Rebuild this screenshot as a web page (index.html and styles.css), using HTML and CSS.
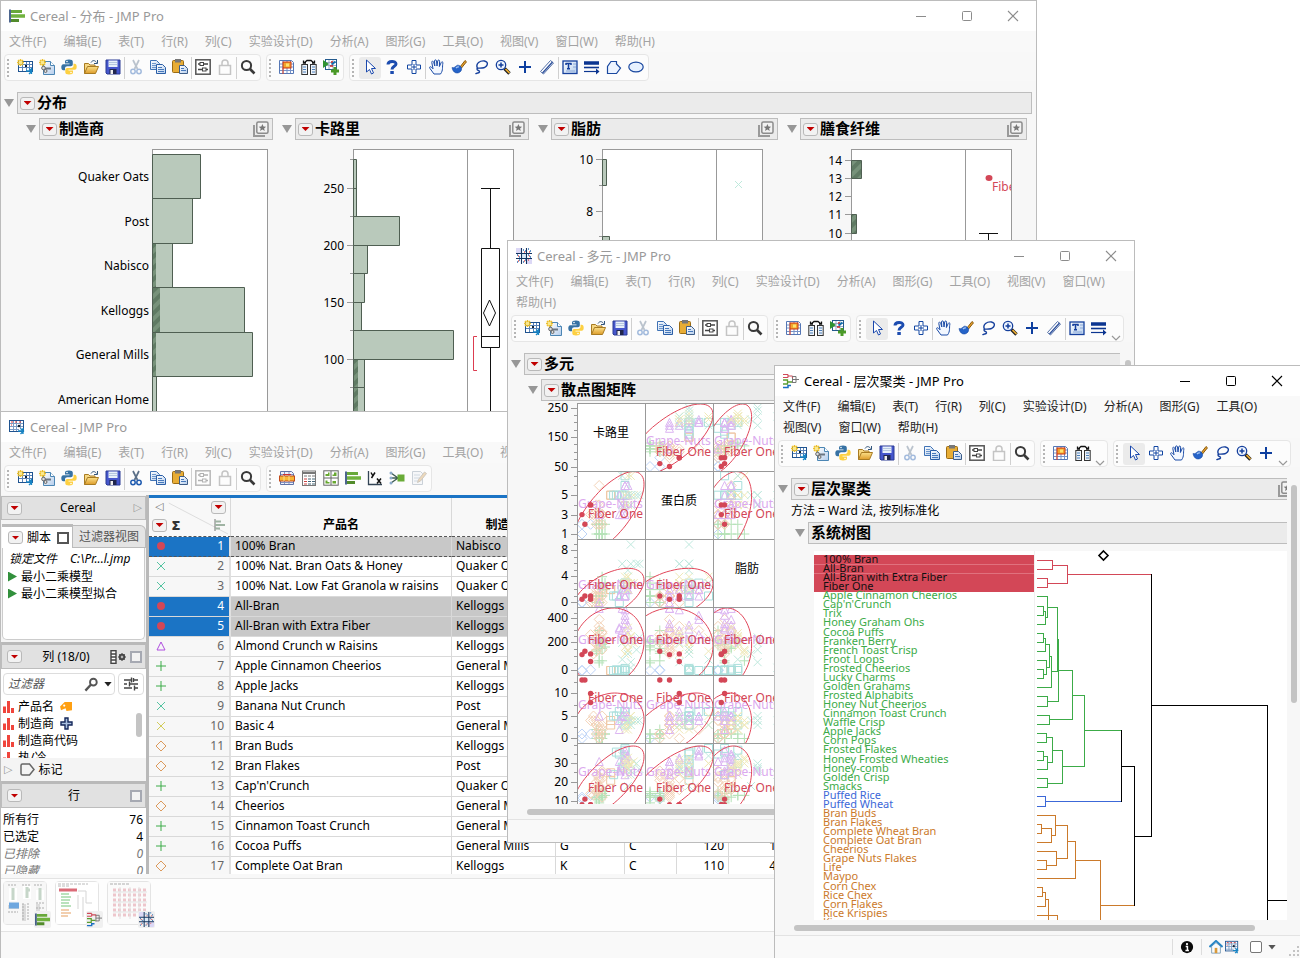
FILE: index.html
```html
<!DOCTYPE html>
<html lang="zh-CN">
<head>
<meta charset="utf-8">
<title>JMP Pro</title>
<link rel="stylesheet" href="styles.css">
</head>
<body>
<svg class="defs" aria-hidden="true">
  <defs>
    <pattern id="hatch" width="8" height="8" patternUnits="userSpaceOnUse" patternTransform="rotate(45)">
      <rect width="8" height="8" fill="#77927a"/><rect width="4" height="8" fill="#5f7a63"/>
    </pattern>
    <linearGradient id="sheet" x1="0" y1="0" x2="1" y2="1"><stop offset="0" stop-color="#fff"/><stop offset="1" stop-color="#b4cdec"/></linearGradient>
    <linearGradient id="gold" x1="0" y1="0" x2="0" y2="1"><stop offset="0" stop-color="#fbe08a"/><stop offset="1" stop-color="#dd9c2a"/></linearGradient>
  </defs>
  <symbol id="i-table" viewBox="0 0 16 16"><rect x=".5" y="1.5" width="14" height="11" fill="#fff" stroke="#1f5390"/><path d="M1 4.500h13M1 7.500h13M1 10.500h9M4.500 2v10M7.500 2v10M11.500 2v8" stroke="#7d9dc5" fill="none"/><path d="M2 3h2M6 3h2M10 3h2M2 6h1" stroke="#d33"/><circle cx="10" cy="7" r="1.300" fill="#123"/><path d="M9 12h5M11.500 9.500l3 2.500-3 3M14 9v6" stroke="#1784c4" stroke-width="1.300" fill="none"/></symbol>
  <symbol id="i-new" viewBox="0 0 16 16"><rect x="1.500" y="2.500" width="14" height="10" fill="#fff" stroke="#1f5390"/><path d="M2 5.500h13M2 8.500h13M5.500 3v9M9.500 3v9M12.500 3v9" stroke="#5b84b8" fill="none"/><rect x="8" y="6" width="2" height="2" fill="#123"/><path d="M9 12h5M12 9.500l3 2.500-3 3M14.500 9v6" stroke="#1784c4" stroke-width="1.300" fill="none"/><path d="M0 3.500h7M3.500 0v7M1 1l5 5M6 1L1 6" stroke="#edc02c" stroke-width="1.500"/><rect x="2" y="2" width="3" height="3" fill="#fbe88a"/></symbol>
  <symbol id="i-script" viewBox="0 0 16 16"><path d="M4.500 2.500h7l4 4v9h-11z" fill="url(#sheet)" stroke="#4c86b4"/><path d="M11.500 2.500v4h4" fill="#fff" stroke="#4c86b4"/><path d="M4 9.500h8" stroke="#6a7683" stroke-width="2"/><circle cx="4.500" cy="9" r="1.800" fill="#ddd" stroke="#666"/><circle cx="6.500" cy="12" r="1.500" fill="#ddd" stroke="#666"/><path d="M0 3.500h7M3.500 0v7M1 1l5 5M6 1L1 6" stroke="#edc02c" stroke-width="1.500"/><rect x="2" y="2" width="3" height="3" fill="#fbe88a"/></symbol>
  <symbol id="i-python" viewBox="0 0 16 16"><path d="M8 .500c-3 0-4 .8-4 2.200V4.500h4.500v.7H2.300C1 5.200.3 6.500.3 8.300c0 2 .8 3 2 3H4V9.500c0-1.300 1-2.200 2.300-2.200h3.500c1.200 0 2-.8 2-2V2.700C11.800 1.200 10.500.5 8 .5z" fill="#3772a4"/><path d="M8 15.500c3 0 4-.8 4-2.200v-1.800H7.500v-.7h6.200c1.300 0 2-1.300 2-3.100 0-2-.8-3-2-3h-1.200v2c0 1.300-1 2.200-2.300 2.200H6.300c-1.200 0-2 .8-2 2v2.400c0 1.500 1.200 2.200 3.700 2.200z" fill="#fdd042"/><circle cx="6" cy="2.500" r=".8" fill="#fff"/><circle cx="10" cy="13.500" r=".8" fill="#fff"/></symbol>
  <symbol id="i-open" viewBox="0 0 16 16"><path d="M1.500 14.500V4.500h4l1.500 1.500h5v2" fill="#f6d783" stroke="#a87b22"/><path d="M1.500 14.500l3-7h11l-3 7z" fill="url(#gold)" stroke="#a87b22"/><path d="M8 3.500c1.500-2.500 4-2.500 5.500 0M14.500 1v3.500H11" fill="none" stroke="#31557c"/></symbol>
  <symbol id="i-save" viewBox="0 0 16 16"><path d="M1 1h14v14H2l-1-1z" fill="#4556cc" stroke="#2b3a94"/><rect x="3.500" y="1.500" width="9" height="6.500" fill="#e7f0fa"/><path d="M4 3.500h8M4 5.500h8" stroke="#b5c7df"/><rect x="4.500" y="10" width="7" height="5" fill="#20264d"/><rect x="5.500" y="11" width="2.500" height="4" fill="#eee"/></symbol>
  <symbol id="i-cut" viewBox="0 0 16 16"><path d="M5 1l4.500 9M11 1L6.500 10" stroke="#5a6f88" stroke-width="1.700"/><circle cx="5" cy="12.500" r="2.200" fill="none" stroke="#1f5bb0" stroke-width="1.500"/><circle cx="11" cy="12.500" r="2.200" fill="none" stroke="#1f5bb0" stroke-width="1.500"/></symbol>
  <symbol id="i-copy" viewBox="0 0 16 16"><path d="M.500 1.500h6l3 3v6h-9z" fill="url(#sheet)" stroke="#3f72b5"/><path d="M2 4.500h4M2 6.500h5M2 8.500h5" stroke="#6c96cc"/><path d="M6.500 5.500h6l3 3v6h-9z" fill="url(#sheet)" stroke="#2b5ea6"/><path d="M8 8.500h4M8 10.500h6M8 12.500h6" stroke="#4678bb"/></symbol>
  <symbol id="i-paste" viewBox="0 0 16 16"><rect x=".500" y="1.500" width="11" height="12" rx="1" fill="#e8ad35" stroke="#9a6b14"/><rect x="3" y="0" width="6" height="3.500" fill="#777"/><path d="M7.500 6.500h5l3 3v5h-8z" fill="url(#sheet)" stroke="#3d5d88"/><path d="M9 9.500h3M9 11.500h5" stroke="#4678bb"/></symbol>
  <symbol id="i-prefs" viewBox="0 0 16 16"><rect x=".800" y=".800" width="14.400" height="14.400" fill="#fff" stroke="#555" stroke-width="1.500"/><path d="M3 5h2M9 5h4M3 10.500h4M11 10.500h2" stroke="#444" stroke-width="1.500"/><rect x="5" y="3.500" width="3.500" height="3" fill="#fff" stroke="#444"/><rect x="7.500" y="9" width="3.500" height="3" fill="#fff" stroke="#444"/></symbol>
  <symbol id="i-lock" viewBox="0 0 16 16"><rect x="2.500" y="6.500" width="11" height="9" fill="none" stroke="#c4c4c4" stroke-width="1.500"/><path d="M5 6.500V4a3 3 0 0 1 6 0v2.500" fill="none" stroke="#c4c4c4" stroke-width="1.500"/></symbol>
  <symbol id="i-search" viewBox="0 0 16 16"><circle cx="6.500" cy="6.500" r="4.600" fill="none" stroke="#3a3a3a" stroke-width="2"/><path d="M10 10l4.500 4.500" stroke="#3a3a3a" stroke-width="2.600"/></symbol>
  <symbol id="i-calgrid" viewBox="0 0 16 16"><path d="M.500 1.500h12l2 2v11h-14z" fill="#fff" stroke="#5577b5"/><path d="M1 5h13M1 8h13M1 11.500h13M4 2v12M8 2v12M11.500 2v12" stroke="#7793c8"/><path d="M4 5.500h8" stroke="#d02c1c"/><rect x="4" y="3" width="8" height="6" fill="#f2a52e" stroke="#cc3311"/><rect x="7" y="4.500" width="3" height="3" fill="#ffe36e"/><path d="M4 9v6" stroke="#e23b1c"/></symbol>
  <symbol id="i-join" viewBox="0 0 16 16"><path d="M3 4L6 1.500h4L13 4M2.500 1.500V4H5M13.500 1.500V4H11" fill="none" stroke="#111" stroke-width="1.300"/><rect x=".800" y="5.500" width="5.700" height="10" fill="#edf3fa" stroke="#333"/><rect x="9.500" y="5.500" width="5.700" height="10" fill="#edf3fa" stroke="#333"/><path d="M2 8h3M2 10.500h3M2 13h3M11 8h3M11 10.500h3M11 13h3" stroke="#4b7fb9"/></symbol>
  <symbol id="i-addgrid" viewBox="0 0 16 16"><rect x="2.500" y=".500" width="11" height="10" fill="#fff" stroke="#235a8d"/><path d="M3 3.500h10M3 6.500h10M6 1v9M10 1v9" stroke="#98aac5"/><path d="M0 1l6 4-6 4z" fill="#2f9330"/><path d="M8 3h2M7 7h3" stroke="#c22" stroke-width="1.500"/><path d="M8.500 5.500l4-3" stroke="#126eae" stroke-width="2"/><path d="M12 8v8M8 12h8" stroke="#4b9a28" stroke-width="3"/></symbol>
  <symbol id="i-arrow" viewBox="0 0 16 16"><path d="M4.500 1v12l3-2.500 2 4.500 2-1-2-4.500h4z" fill="#fff" stroke="#1a48ad"/></symbol>
  <symbol id="i-help" viewBox="0 0 16 16"><path d="M4 5.500C4 1.500 12 1.500 12 5c0 2.300-4 2.500-4 5.500" fill="none" stroke="#1c4cb0" stroke-width="3"/><rect x="6.300" y="12" width="3.500" height="3" fill="#1c4cb0"/></symbol>
  <symbol id="i-plusbox" viewBox="0 0 16 16"><path d="M6 1.500h4V6h4.500v4H10v4.500H6V10H1.500V6H6z" fill="#fff" stroke="#1347a2"/><path d="M8 5v6M5 8h6" stroke="#1347a2"/></symbol>
  <symbol id="i-hand" viewBox="0 0 16 16"><path d="M5 15L1 9.500c-1.200-1.800.7-2.300 1.500-1.200l1.500 1.500L2.800 3.500c-.3-1.700 1.500-1.700 1.900-.3L5.800 7l-.3-5c0-1.500 1.900-1.500 2 0l.5 5 .7-5c.2-1.400 1.900-1.300 1.900.2L10.400 7.500l1.800-4c.6-1.300 2-.6 1.700.6C13 8 14.500 11 11.500 15z" fill="#f2f7ff" stroke="#1b4ba6"/></symbol>
  <symbol id="i-brush" viewBox="0 0 16 16"><path d="M9 8l5-6.500 1.500 1.300L10.500 9z" fill="#e6a02a" stroke="#8a5a10"/><path d="M1 8.500c2 1 3-1 5.500-2.300 3.500 0 5 3 3.500 5.800C7 15.500 2 14.500 1 8.500z" fill="#2563c8" stroke="#1347a2" stroke-width=".600"/><path d="M5 9c1-1 2-1.300 3-1" stroke="#a6c7f5" fill="none" stroke-width="1.300"/></symbol>
  <symbol id="i-lasso" viewBox="0 0 16 16"><path d="M4.500 9.500C2 4 7.500 1.500 11.500 2c5 1 3 6.500-2.500 7-3 .5-5-.5-5 1 0 2 3 1 2.500 3C6 14.500 4 13.500 2.500 15" fill="none" stroke="#153f9c" stroke-width="1.400"/></symbol>
  <symbol id="i-zoom" viewBox="0 0 16 16"><path d="M9.500 9.500l5 5" stroke="#222" stroke-width="3.400"/><path d="M10.500 10l4 4" stroke="#eeae30" stroke-width="1.700"/><circle cx="6" cy="6" r="4.700" fill="#eef5ff" stroke="#153f9c" stroke-width="1.300"/><path d="M6 3.500v5M3.500 6h5" stroke="#153f9c" stroke-width="1.500"/></symbol>
  <symbol id="i-cross" viewBox="0 0 16 16"><path d="M8 2v12M2 8h12" stroke="#0e3f9f" stroke-width="2"/></symbol>
  <symbol id="i-ruler" viewBox="0 0 16 16"><path d="M1.500 12.500l10-11 3 2.500-10 11z" fill="#fff" stroke="#5470a8"/><path d="M3.500 14l10-11" stroke="#2c4f9b" stroke-width="1.300"/></symbol>
  <symbol id="i-text" viewBox="0 0 16 16"><rect x="1" y="2" width="14" height="12.500" fill="url(#sheet)" stroke="#153f9c" stroke-width="1.300"/><path d="M3.500 4.500h6M6.500 4.500V9.500M5 9.700h3M4 4v2M9 4v2" stroke="#153f9c" stroke-width="1.500"/><path d="M11 5h3M11 8h3M4 12h9" stroke="#8ba8d8"/></symbol>
  <symbol id="i-lines" viewBox="0 0 16 16"><path d="M0 4h15" stroke="#0b3590" stroke-width="3.500"/><path d="M0 8.500h15" stroke="#0b3590" stroke-width="1.600"/><path d="M0 12.500h14" stroke="#0b3590" stroke-width="1.200"/><path d="M12 9.500l3.500 3-3.500 3z" fill="#0b3590"/></symbol>
  <symbol id="i-poly" viewBox="0 0 16 16"><path d="M1.500 14.500V7.500L5 2.500h5.500V5L14.500 9l-4 5.500z" fill="#edf4ff" stroke="#1a489f" stroke-width="1.200"/></symbol>
  <symbol id="i-oval" viewBox="0 0 16 16"><ellipse cx="8" cy="8" rx="7.200" ry="4.800" fill="#e7f1ff" stroke="#1a489f" stroke-width="1.200"/></symbol>
  <symbol id="i-globe" viewBox="0 0 16 16"><path d="M1.500 1.500h11l2 2v11h-13z" fill="#eef1fa" stroke="#6073a6"/><path d="M2 4.500h12M2 12.500h12M5.500 2v12M10 2v12" stroke="#8393c2"/><path d="M4 4.500h8" stroke="#c33"/><rect x=".500" y="6" width="15" height="5" fill="#f7b635" stroke="#c24a1b"/><path d="M5 6v5M10 6v5" stroke="#fbe38b"/></symbol>
  <symbol id="i-calc" viewBox="0 0 16 16"><rect x="1.500" y="1" width="13" height="14.500" fill="#fff" stroke="#777"/><path d="M2 3h12" stroke="#777" stroke-width="2"/><path d="M3 6h3M7 6h3M11 6h3" stroke="#777"/><path d="M3 9h3M3 11.500h3M3 14h3" stroke="#c44"/><path d="M7 9h3M7 11.500h3M7 14h3M11 9h3M11 11.500h3M11 14h3" stroke="#467"/></symbol>
  <symbol id="i-quad" viewBox="0 0 16 16"><rect x=".800" y=".800" width="14.400" height="14.400" fill="#fff" stroke="#666"/><path d="M8 1v14M1 8h14" stroke="#666"/><path d="M2.500 6V4H5V2.500H6.500V6zM9.500 6V4.500H11V2.500H13.500V6zM2.500 13.500V10.500H4.500V12H6.500v1.500zM9.500 13.500V11H13v2.500z" fill="#67a82f"/></symbol>
  <symbol id="i-dist" viewBox="0 0 16 16"><path d="M1 1.500v13" stroke="#12336a" stroke-width="1.500"/><path d="M2 3.500h11" stroke="#68a83a" stroke-width="3"/><path d="M2 8h14" stroke="#70b23e" stroke-width="3.500"/><path d="M2 12.500h8" stroke="#528b2b" stroke-width="3"/></symbol>
  <symbol id="i-fit" viewBox="0 0 16 16"><path d="M1.500 1v13.500H15" fill="none" stroke="#345" stroke-width="1.300"/><path d="M4 2.500l2 3.500M8 2.500L4.500 8M10 8.500l4 5M14 8.500l-4 5" stroke="#111" stroke-width="1.500"/></symbol>
  <symbol id="i-model" viewBox="0 0 16 16"><path d="M2 3l7 5-7 5M2 8h7" fill="none" stroke="#3f5d53" stroke-width="1.400"/><circle cx="2" cy="3" r="1.500" fill="#8aa8c8"/><circle cx="2" cy="8" r="1.500" fill="#8aa8c8"/><circle cx="2" cy="13" r="1.500" fill="#8aa8c8"/><rect x="8.500" y="4.500" width="7" height="7" fill="#69ab37"/></symbol>
  <symbol id="i-note" viewBox="0 0 16 16"><path d="M1.500 1.500h8l2 2v11h-10z" fill="#eef2f6" stroke="#8292a5"/><path d="M3 5h6M3 8h6M3 11h6" stroke="#8fa4bb"/><path d="M6.500 12.500l1-3 6-7.500 2 1.500-6 7.500z" fill="#d9a55a" stroke="#8b7e69"/></symbol>
  <symbol id="i-tree" viewBox="0 0 16 16"><path d="M0 1.500h5M0 4.500h5M5 1.500v3M5 3h4.500M9.500 3v2" fill="none" stroke="#d04a58" stroke-width="1.200"/><path d="M9.500 5v5M9.500 6.500H13M13 3.500v6M13 6.500h3M9 3.500h4M9 9.500h4" fill="none" stroke="#777"/><path d="M0 7h4.500v4H0M4.500 9h4.500" fill="none" stroke="#5b9e31" stroke-width="1.300"/><path d="M0 14.500h5V12.500H8" fill="none" stroke="#1b6fc2" stroke-width="1.500"/></symbol>
  <symbol id="i-matrix" viewBox="0 0 16 16"><rect width="5" height="5" fill="#dcd8f6"/><rect x="5.500" y="5.500" width="5" height="5" fill="#dcebf8"/><rect x="11" y="11" width="5" height="5" fill="#dcd8f6"/><path d="M5.500 0v16M10.500 0v16M0 5.500h16M0 10.500h16" stroke="#14335f" stroke-width="1.100"/><path d="M7 2h1M9 3h1M12 1h1M14 3h1M1 7h1M3 9h1M12 7h1M14 9h1M1 14h1M3 12h1M7 14h1M9 12h1" stroke="#2b6eb5" stroke-width="1.300"/><path d="M8 4h1M13 4h1M2 8h1M13 8h1M2 13h1M8 13h1M12 12h1" stroke="#d55" stroke-width="1.300"/></symbol>
  <symbol id="i-star" viewBox="0 0 16 16"><path d="M1 4v11h11" fill="none" stroke="#999" stroke-width="2"/><rect x="3.800" y="1" width="11.200" height="11.200" rx="1.500" fill="#f2f2f2" stroke="#8c8c8c" stroke-width="1.500"/><path d="M9.400 3l1.100 2.500 2.600.2-2 1.700.7 2.600-2.400-1.400L7 10l.7-2.600-2-1.700 2.600-.2z" fill="#777"/></symbol>
  <symbol id="i-barcol" viewBox="0 0 12 12"><path d="M1.500 5.500V12M5.500 0v12M9.500 7v5" stroke="#f0453c" stroke-width="3"/></symbol>
  <symbol id="i-tag" viewBox="0 0 14 12"><path d="M5 1h8v9l-6 1-1-3-5 2-1-4z" fill="#ffa012"/><circle cx="4.500" cy="5" r="1.200" fill="#fff"/></symbol>
  <symbol id="i-home" viewBox="0 0 16 16"><path d="M3 7v8h10V7L8 3z" fill="#fafafa" stroke="#7a9cb5"/><path d="M.500 8L8 1l7.500 7" fill="none" stroke="#2a86c4" stroke-width="2.200"/><rect x="6.500" y="9" width="3" height="6" fill="#d99a3a"/></symbol>
  <symbol id="i-info" viewBox="0 0 16 16"><circle cx="8" cy="8" r="7" fill="#0a0a0a"/><circle cx="8" cy="4.600" r="1.300" fill="#fff"/><path d="M6.500 7.500h2V11.500M6.200 12h4" stroke="#fff" stroke-width="1.700" fill="none"/></symbol>
  <symbol id="i-sliders" viewBox="0 0 16 16"><path d="M1 4h7M11 4h4M1 8h3M7 8h8M1 12h8M12 12h3M8.500 1.500v5M6.500 5.500v5M11.500 9.500v5M10.500 2v4" stroke="#444" stroke-width="1.400"/></symbol>
  <symbol id="i-wrench" viewBox="0 0 16 16"><circle cx="10" cy="5.500" r="3.600" fill="none" stroke="#555" stroke-width="2"/><path d="M7.500 8l-6 6.500" stroke="#555" stroke-width="2.500"/></symbol>
  <symbol id="i-colset" viewBox="0 0 16 14"><rect x="1" y=".700" width="5" height="12.600" fill="#fff" stroke="#444" stroke-width="1.400"/><path d="M1 4h5M1 7h5M1 10h5" stroke="#444" stroke-width="1.400"/><circle cx="12" cy="7" r="2.300" fill="none" stroke="#444" stroke-width="1.800"/><path d="M12 3v8M8 7h8M9.300 4.300l5.400 5.400M14.700 4.300L9.300 9.700" stroke="#444"/><circle cx="12" cy="7" r="1" fill="#ddd"/></symbol>
  <symbol id="i-min" viewBox="0 0 12 12"><path d="M1 6.500h10" stroke="currentColor"/></symbol>
  <symbol id="i-max" viewBox="0 0 12 12"><rect x="1.500" y="1.500" width="9" height="9" rx="1" fill="none" stroke="currentColor"/></symbol>
  <symbol id="i-close" viewBox="0 0 12 12"><path d="M1 1l10 10M11 1L1 11" stroke="currentColor" stroke-width="1.100"/></symbol>
</svg>

<main class="desktop">
  <!-- Distribution report -->
  <section class="window win-dist" aria-label="分布">
    <header class="titlebar" data-icon="dist" data-title="Cereal - 分布 - JMP Pro"></header>
    <nav class="menubar"></nav>
    <div class="toolbar" data-tools="new script python open save | -cut copy paste | prefs lock | search ; calgrid join addgrid ; *arrow help plusbox | hand brush lasso zoom cross ruler | text lines poly oval"></div>
    <div class="report">
      <div class="outline"><button class="disclose" aria-label="折叠"></button><div class="bar"><button class="hot" aria-label="菜单"></button><h2>分布</h2></div></div>
      <div class="dist-cols">
        <article class="dist wide">
          <div class="outline"><button class="disclose" aria-label="折叠"></button><div class="bar"><button class="hot" aria-label="菜单"></button><h2>制造商</h2><svg class="star"><use href="#i-star"/></svg></div></div>
          <svg class="chart" width="247" height="320" viewBox="26 140 247 320">
            <rect x="152.500" y="149.500" width="115" height="400" class="frame"/>
            <g class="bars"><path d="M152.500 154.500h48v44h-48zM152.500 198.500h40v45h-40zM152.500 243.500h20v44h-20zM152.500 287.500h92v45h-92zM152.500 332.500h100v44h-100zM152.500 376.500h4v60h-4z"/></g>
            <path d="M153 244h3v43h-3zM153 288h7v44h-7zM153 333h3v43h-3z" fill="url(#hatch)"/>
            <g class="end"><text x="149" y="181">Quaker Oats</text><text x="149" y="226">Post</text><text x="149" y="270">Nabisco</text><text x="149" y="315">Kelloggs</text><text x="149" y="359">General Mills</text><text x="149" y="404">American Home</text></g>
          </svg>
        </article>
        <article class="dist wide">
          <div class="outline"><button class="disclose" aria-label="折叠"></button><div class="bar"><button class="hot" aria-label="菜单"></button><h2>卡路里</h2><svg class="star"><use href="#i-star"/></svg></div></div>
          <svg class="chart" width="247" height="320" viewBox="282 140 247 320">
            <rect x="353.500" y="149.500" width="160" height="400" class="frame"/><path d="M467.500 149v400" class="axis"/>
            <g class="bars"><path d="M353.500 159.500h3v57h-3zM353.500 188.500h3M353.500 216.500h46v29h-46zM353.500 245.500h14v28h-14zM353.500 273.500h11v29h-11zM353.500 302.500h8v28h-8zM353.500 330.500h100v29h-100zM353.500 359.500h11v28h-11zM353.500 387.500h11v60h-11z"/></g>
            <path d="M354 360h4v27h-4zM354 388h4v60h-4z" fill="url(#hatch)"/>
            <path class="axis" d="M347 188.500h6M347 245.500h6M347 302.500h6M347 359.500h6M350 159.500h3M350 216.500h3M350 273.500h3M350 330.500h3M350 387.500h3"/>
            <path class="box" d="M481 188.500h19M490.500 188v60M481.500 248.500h18v99h-18zM481 336.500h19M490.500 347v100M489.500 300l6 13-6 13-6-13z"/>
            <path d="M477 336.500h-3.500v34h3.500" fill="none" stroke="#dc3c50"/>
            <g class="end"><text x="344" y="193">250</text><text x="344" y="250">200</text><text x="344" y="307">150</text><text x="344" y="364">100</text></g>
          </svg>
        </article>
        <article class="dist">
          <div class="outline"><button class="disclose" aria-label="折叠"></button><div class="bar"><button class="hot" aria-label="菜单"></button><h2>脂肪</h2><svg class="star"><use href="#i-star"/></svg></div></div>
          <svg class="chart" width="240" height="320" viewBox="538 140 240 320">
            <rect x="602.500" y="149.500" width="160" height="400" class="frame"/><path d="M716.500 149v400" class="axis"/>
            <g class="bars"><path d="M602.500 159.500h4v26h-4zM602.500 236.500h7v26h-7z"/></g>
            <path class="axis" d="M596 159.500h6M596 211.500h6M599 185.500h3M599 236.500h3"/>
            <path d="M735 181l7 7M742 181l-7 7" stroke="#bfe9dc"/>
            <g class="end"><text x="593" y="164">10</text><text x="593" y="216">8</text></g>
          </svg>
        </article>
        <article class="dist">
          <div class="outline"><button class="disclose" aria-label="折叠"></button><div class="bar"><button class="hot" aria-label="菜单"></button><h2>膳食纤维</h2><svg class="star"><use href="#i-star"/></svg></div></div>
          <svg class="chart" width="225" height="320" viewBox="787 140 225 320">
            <rect x="851.500" y="149.500" width="160" height="400" class="frame"/><path d="M965.500 149v400" class="axis"/>
            <g class="bars"><path class="hatched" d="M851.500 160.500h10v18h-10zM851.500 214.500h5v19h-5z"/></g>
            <path class="axis" d="M845 160.500h6M845 178.500h6M845 196.500h6M845 214.500h6M845 233.500h6"/>
            <ellipse cx="989" cy="178" rx="3.500" ry="3" fill="#d34757"/><text x="992" y="191" fill="#d34757">Fiber One</text>
            <path class="box" d="M979 233.500h19M988.500 233v100"/><rect x="1011" y="149" width="1" height="300" fill="#999"/>
            <g class="end"><text x="842" y="165">14</text><text x="842" y="183">13</text><text x="842" y="201">12</text><text x="842" y="219">11</text><text x="842" y="238">10</text></g>
          </svg>
        </article>
      </div>
    </div>
  </section>

  <!-- Data table -->
  <section class="window win-data" aria-label="Cereal">
    <header class="titlebar" data-icon="table" data-title="Cereal - JMP Pro"></header>
    <nav class="menubar"></nav>
    <div class="toolbar" data-tools="new script python open save | cut copy paste | -prefs lock | search ; globe calc quad dist fit model -note"></div>
    <div class="data-body">
      <aside class="side">
        <div class="side-head"><button class="hot" aria-label="菜单"></button><span>Cereal</span><button class="tri-right" aria-label="展开">▷</button></div>
        <div class="tabs"><div class="tab on"><button class="hot" aria-label="菜单"></button><button class="plain">脚本</button><i class="pane dark"></i></div><button class="tab off">过滤器视图</button></div>
        <div class="scripts">
          <p class="ital"><span>锁定文件</span><span>C:\Pr...l.jmp</span></p>
          <button class="run">最小二乘模型</button>
          <button class="run">最小二乘模型拟合</button>
        </div>
        <div class="side-head"><button class="hot" aria-label="菜单"></button><span>列 (18/0)</span><svg width="16" height="14"><use href="#i-colset"/></svg><i class="pane"></i></div>
        <div class="filter"><label class="field"><input type="text" placeholder="过滤器" aria-label="过滤器"><svg width="15" height="15"><use href="#i-wrench"/></svg><i class="caret"></i></label><button class="opt" aria-label="选项"><svg width="16" height="16"><use href="#i-sliders"/></svg></button></div>
        <div class="cols">
          <ul>
            <li><svg width="12" height="12"><use href="#i-barcol"/></svg>产品名<svg width="13" height="11"><use href="#i-tag"/></svg></li>
            <li><svg width="12" height="12"><use href="#i-barcol"/></svg>制造商<svg width="13" height="13" viewBox="0 0 13 13"><path d="M5 1h3v4h4v3H8v4H5V8H1V5h4z" fill="#a9bfdf" stroke="#15275a" stroke-width="1.400"/></svg></li>
            <li><svg width="12" height="12"><use href="#i-barcol"/></svg>制造商代码</li>
            <li><svg width="12" height="12"><use href="#i-barcol"/></svg>热/冷</li>
          </ul>
          <i class="thumb"></i>
        </div>
        <div class="marks"><span class="tri-right">▷</span><svg width="15" height="13" viewBox="0 0 15 13"><path d="M1 2.500Q1 1 2.500 1H9.500L14 6.500 9.500 12H2.500Q1 12 1 10.500z" fill="none" stroke="#666" stroke-width="1.500"/></svg>标记</div>
        <div class="side-head rows-head"><button class="hot" aria-label="菜单"></button><span>行</span><i class="pane"></i></div>
        <dl class="counts"><div><dt>所有行</dt><dd>76</dd></div><div><dt>已选定</dt><dd>4</dd></div><div class="dim"><dt>已排除</dt><dd>0</dd></div><div class="dim"><dt>已隐藏</dt><dd>0</dd></div></dl>
      </aside>
      <div class="grid-wrap">
        <table class="grid">
          <colgroup><col class="c0"><col class="c1"><col class="c2"><col class="c3"><col class="c4"><col class="c4"><col class="c4"><col></colgroup>
          <thead><tr>
            <td class="corner"><svg class="diag" viewBox="0 0 82 38" preserveAspectRatio="none"><path d="M20 5L80 36" stroke="#ddd"/></svg>
              <div class="corner-row"><span class="tri-left">◁</span><button class="hot" aria-label="列菜单"></button></div>
              <div class="corner-row low"><button class="hot" aria-label="行菜单"></button><b>Σ</b><svg width="12" height="12" viewBox="0 0 12 12"><path d="M1 0v12" stroke="#777"/><path d="M1 2.500h6M1 6h10M1 9.500h5" stroke="#9fb3a3" stroke-width="2"/></svg></div></td>
            <th>产品名</th><th>制造商</th><th></th><th></th><th></th><th></th><th></th></tr></thead>
          <tbody id="rows"></tbody>
        </table>
      </div>
    </div>
    <div class="thumbs">
      <button class="shot" aria-label="分布"><svg viewBox="0 0 42 42"><rect width="42" height="42" fill="#f6f6f6"/><path d="M5 6h8v13H5zM19 4h8v13h-8zM32 8h8v10h-8z" fill="#fff"/><path d="M9 6v12M23 5v11M36 6v12M22 8h4" stroke="#b9ccbc" stroke-width="3"/><path d="M4 25h11M20 22v17M34 22v8" stroke="#d3d3d3" stroke-width="4"/><path d="M5 22h10M5 25h10" stroke="#4b92d8" stroke-width="3"/><path d="M19 21v18M24 21v18M4 3h8M18 3h8M30 3h8M4 30h10M32 21h8M32 26h8" stroke="#999" stroke-dasharray="2 1"/></svg><svg class="badge"><use href="#i-dist"/></svg></button>
      <button class="shot" aria-label="层次聚类"><svg viewBox="0 0 42 42"><rect width="42" height="42" fill="#fff"/><path d="M2 2h30M2 4h12" stroke="#aaa" stroke-dasharray="3 1"/><path d="M3 8h18" stroke="#d34757" stroke-width="3"/><path d="M5 12h8M5 15h10M5 18h9M5 21h8M5 24h10" stroke="#a9dbad" stroke-width="2"/><path d="M5 28h8M5 31h10M5 34h7" stroke="#f0c49c" stroke-width="2"/><path d="M22 9h8v12h6M22 13v14M27 15v20" fill="none" stroke="#ccc"/></svg><svg class="badge"><use href="#i-tree"/></svg></button>
      <button class="shot" aria-label="多元"><svg viewBox="0 0 42 42"><rect width="42" height="42" fill="#fbfbfb"/><path d="M2 2h20" stroke="#999" stroke-dasharray="3 1"/><path d="M5 8h34M5 13h34M5 18h34M5 23h34M5 28h34M5 33h34" stroke="#eab9c0" stroke-width="3" stroke-dasharray="3 2"/><path d="M5 10h34M5 20h34M5 30h34M12 5v32M22 5v32M31 5v32" stroke="#ddd"/></svg><svg class="badge"><use href="#i-matrix"/></svg></button>
    </div>
    <footer class="status"></footer>
  </section>

  <!-- Multivariate report -->
  <section class="window win-multi" aria-label="多元">
    <header class="titlebar" data-icon="matrix" data-title="Cereal - 多元 - JMP Pro"></header>
    <nav class="menubar"></nav>
    <div class="toolbar" data-tools="new script python open save | -cut copy paste | prefs lock | search ; calgrid join addgrid ; *arrow help plusbox | hand brush lasso zoom cross ruler | text lines &gt;"></div>
    <div class="report scroll">
      <div class="outline"><button class="disclose" aria-label="折叠"></button><div class="bar"><button class="hot" aria-label="菜单"></button><h2>多元</h2></div></div>
      <div class="nested">
        <div class="outline"><button class="disclose" aria-label="折叠"></button><div class="bar"><button class="hot" aria-label="菜单"></button><h2>散点图矩阵</h2></div></div>
        <svg id="matrix" class="chart" width="600" height="404" viewBox="528 401 600 404"></svg>
      </div>
      <i class="vthumb"></i>
    </div>
    <div class="hscroll"><i></i></div>
    <footer class="status"></footer>
  </section>

  <!-- Hierarchical clustering report -->
  <section class="window win-cluster active" aria-label="层次聚类">
    <header class="titlebar" data-icon="tree" data-title="Cereal - 层次聚类 - JMP Pro"></header>
    <nav class="menubar"></nav>
    <div class="toolbar" data-tools="new script python open save | -cut copy paste | prefs lock | search ; calgrid join &gt; ; *arrow plusbox hand brush lasso zoom cross &gt;"></div>
    <div class="report scroll">
      <div class="outline"><button class="disclose" aria-label="折叠"></button><div class="bar"><button class="hot" aria-label="菜单"></button><h2>层次聚类</h2><svg class="star cropped"><use href="#i-star"/></svg></div></div>
      <p class="method">方法 = Ward 法, 按列标准化</p>
      <div class="nested">
        <div class="outline"><button class="disclose" aria-label="折叠"></button><div class="bar plain-bar"><h2>系统树图</h2></div></div>
        <svg id="dendro" class="chart" width="492" height="376" viewBox="795 544 492 376"></svg>
      </div>
      <i class="vthumb"></i>
    </div>
    <div class="hscroll"><i></i></div>
    <footer class="status">
      <button class="sbtn lined" aria-label="信息"><svg width="14" height="14"><use href="#i-info"/></svg></button>
      <button class="sbtn lined home" aria-label="主窗口"><svg width="14" height="14"><use href="#i-home"/></svg></button>
      <button class="sbtn" aria-label="数据表"><svg width="14" height="14"><use href="#i-table"/></svg></button>
      <input type="checkbox" class="box-check" aria-label="选择窗口"><i class="caret grey"></i>
      <svg class="grip" width="12" height="12" viewBox="0 0 12 12"><path d="M9 1h2M9 5h2M5 5h2M9 9h2M5 9h2M1 9h2" stroke="#c4c4c4" stroke-width="2"/></svg>
    </footer>
  </section>
</main>
<script src="app.js"></script>
</body>
</html>
```
FILE: styles.css
```css
* { box-sizing: border-box; }
body { margin: 0; background: #fff; color: #000; font: 12px/16px "Noto Sans", "Noto Sans CJK SC", sans-serif; }
button { margin: 0; padding: 0; border: 0; background: none; font: inherit; color: inherit; }
h2, p, ul, dl, dd { margin: 0; padding: 0; }
svg { flex: none; }
.defs { position: absolute; width: 0; height: 0; }
.desktop { position: relative; min-height: 100vh; overflow: hidden; }

/* Windows */
.window { position: absolute; display: flex; flex-direction: column; overflow: hidden; background: #f8f8f8; border: 1px solid #bcbcbc; }
.win-dist { left: 0; top: 0; right: 263px; height: 600px; }
.win-data { left: 0; top: 411px; right: 160px; bottom: 0; border-bottom: 0; }
.win-multi { left: 507px; top: 240px; right: 165px; bottom: 115px; }
.win-cluster { left: 774px; top: 365px; right: 0; bottom: 0; border-right: 0; border-bottom: 0; }

.titlebar { flex: none; display: flex; align-items: center; height: 30px; background: #fff; color: #999; font-size: 13px; }
.titlebar .app { width: 16px; height: 16px; margin: 0 5px 0 8px; }
.titlebar h1 { flex: 1; margin: 0; font: inherit; white-space: nowrap; }
.titlebar button { display: grid; place-items: center; width: 46px; height: 30px; color: #8c8c8c; }
.active .titlebar, .active .titlebar button { color: #000; }
.menubar { flex: none; display: flex; flex-wrap: wrap; padding-right: 4px; background: #f9f9f9; color: #a3a3a3; }
.menubar button { height: 21px; padding: 0 9px 0 8px; white-space: nowrap; }
.active .menubar { color: #222; }
.win-data .menubar { flex-wrap: nowrap; }

.toolbar { flex: none; display: flex; gap: 5px; margin-top: 2px; padding-left: 3px; }
.tools { display: flex; align-items: center; height: 27px; padding: 0 1px 0 2px; border: 1px solid #e6e6e6; border-radius: 4px; background: #fcfcfc; }
.handle { width: 2px; height: 18px; margin-right: 5px; background: repeating-linear-gradient(#b5b5b5 0 2px, transparent 2px 4px); }
.tool { display: grid; place-items: center; width: 22px; height: 22px; border-radius: 3px; padding-bottom: 1px; }
.tool svg { width: 16px; height: 16px; }
.tool.on { background: #ebebeb; }
.tool.off svg { opacity: .4; }
.split { width: 1px; height: 22px; background: #d0d0d0; }
.more { align-self: flex-end; width: 12px; height: 12px; }

/* Reports */
.report { position: relative; flex: 1; min-height: 0; padding: 11px 4px 0 3px; overflow: hidden; background: #f7f7f7; }
.outline { display: flex; align-items: center; height: 22px; }
.disclose { flex: none; width: 10px; height: 8px; margin-right: 3px; background: #979797; clip-path: polygon(0 0, 100% 0, 50% 100%); }
.bar { flex: 1; display: flex; align-items: center; min-width: 0; height: 22px; padding: 0 3px 0 2px; overflow: hidden; border: 1px solid #bdbdbd; background: #ebebeb; }
.bar h2 { flex: 1; font-size: 15px; line-height: 18px; font-weight: 700; white-space: nowrap; padding: 0 0 2px 2px; }
.plain-bar { padding-left: 0; }
.hot { flex: none; width: 15px; height: 13px; border: 1px solid #b9b9b9; border-radius: 3px; background: #f2f2f2; display: grid; place-items: center; }
.hot::before { content: ""; width: 8px; height: 4px; background: #c00000; clip-path: polygon(0 0, 100% 0, 50% 100%); }
.star { width: 16px; height: 16px; }
.star.cropped { margin-right: -10px; }
.dist-cols { display: flex; gap: 9px; margin: 4px 0 0 22px; }
.dist { flex: none; width: 240px; }
.dist.wide { width: 247px; }
.chart { display: block; font-size: 12px; }
.frame { fill: #fff; stroke: #999; }
.axis { fill: none; stroke: #999; }
.bars path { fill: #b9c9bb; stroke: #4f5f52; }
.bars .hatched { fill: url(#hatch); }
.box { fill: none; stroke: #111; }
.end { text-anchor: end; }
.nested { margin: 4px 0 0 17px; }
.win-cluster .nested { margin-top: 0; }
.win-cluster .report { padding-right: 13px; }
.win-cluster .bar { border-right: 0; }
.win-multi .report { padding-right: 14px; }
.win-multi .bar { border-right: 0; }
.method { height: 22px; margin-left: 13px; line-height: 22px; }
.vthumb { position: absolute; right: 3px; top: 18px; width: 6px; height: 218px; border-radius: 3px; background: #c4c4c4; }
.hscroll { flex: none; height: 15px; padding: 5px 45px 0 19px; background: #f7f7f7; }
.hscroll i { display: block; height: 6px; border-radius: 3px; background: #c4c4c4; }
.status { flex: none; display: flex; align-items: center; justify-content: flex-end; height: 23px; border-top: 1px solid #e3e3e3; background: #f9f9f9; }
.sbtn { display: grid; place-items: center; width: 16px; height: 16px; }
.sbtn.lined { width: 29px; border-left: 1px solid #ddd; }
.sbtn.home { width: 23px; padding-left: 6px; }
.box-check { appearance: none; width: 12px; height: 12px; margin: 0 6px 0 10px; border: 1px solid #777; border-radius: 2px; background: #fff; }
.caret { width: 8px; height: 5px; background: #222; clip-path: polygon(0 0, 100% 0, 50% 100%); }
.caret.grey { background: #555; }
.grip { align-self: flex-end; margin-left: 12px; }

/* Data table window */
.data-body { flex: 1; display: flex; min-height: 0; margin: 3px 0 4px; overflow: hidden; }
.side { flex: none; width: 148px; display: flex; flex-direction: column; overflow: hidden; border-right: 3px solid #b9b9b9; background: #f4f4f4; }
.side > * { flex: none; }
.side-head { display: flex; align-items: center; height: 24px; margin-top: 1px; padding: 0 3px 0 5px; border: 1px solid #bdbdbd; background: #e1e1e1; }
.side-head span { flex: 1; text-align: center; }
.tri-right { color: #999; font: 11px/12px "DejaVu Sans", sans-serif; }
.pane { width: 12px; height: 12px; border: 2px solid #a6a9b2; background: #f2f2f2; margin-left: 4px; }
.pane.dark { border-color: #555; background: #fff; margin-left: 6px; }
.tabs { display: flex; height: 24px; margin-top: 4px; padding-left: 1px; }
.tab.on { display: flex; align-items: center; width: 71px; padding-left: 6px; border-top: 3px solid #bbb; border-right: 1px solid #bbb; background: #fff; white-space: nowrap; }
.tab.on .hot { margin-right: 4px; }
.tab.off { flex: 1; margin-top: 1px; border: 1px solid #bbb; border-left: 0; border-radius: 0 6px 0 0; background: #e4e4e4; color: #555; white-space: nowrap; }
.scripts { height: 92px; margin: 0 1px 2px; padding: 3px 5px; border: 1px solid #ccc; border-top: 0; border-radius: 0 0 5px 5px; background: #fff; }
.scripts .ital { display: flex; gap: 13px; height: 17px; padding-left: 1px; font-style: italic; white-space: nowrap; }
.run { display: flex; align-items: center; height: 17px; white-space: nowrap; }
.run::before { content: ""; width: 9px; height: 10px; margin-right: 4px; background: #32903c; clip-path: polygon(0 0, 100% 50%, 0 100%); }
.scripts + .side-head, .rows-head { margin-top: 0; height: 27px; border-top: 3px solid #b9b9b9; }
.filter { display: flex; gap: 3px; height: 28px; padding: 4px 2px 2px; background: #fff; }
.field { flex: 1; display: flex; align-items: center; gap: 5px; min-width: 0; padding: 0 2px 0 4px; border: 1px solid #ddd; border-radius: 4px; }
.field input { flex: 1; min-width: 0; width: 40px; padding: 0; border: 0; outline: 0; font: inherit; font-style: italic; background: none; }
.field input::placeholder { color: #555; opacity: 1; }
.opt { width: 26px; border: 1px solid #ddd; border-radius: 4px; display: grid; place-items: center; }
.cols { display: flex; justify-content: space-between; height: 61px; padding: 1px 4px 0 2px; overflow: hidden; background: #fff; }
.cols ul { list-style: none; }
.cols li { display: flex; align-items: center; gap: 3px; height: 17px; white-space: nowrap; }
.cols li svg:last-child:not(:first-child) { margin-left: 3px; }
.thumb { width: 6px; height: 24px; margin-top: 15px; border-radius: 3px; background: #c4c4c4; }
.marks { display: flex; align-items: center; gap: 3px; height: 23px; padding-left: 3px; }
.marks svg { margin-left: 5px; }
.counts { flex: 1 1 auto; padding: 4px 3px 0 2px; background: #fff; }
.counts div { display: flex; justify-content: space-between; height: 17px; }
.counts .dim { color: #777; font-style: italic; }

.grid-wrap { flex: 1; min-width: 0; overflow: hidden; border-top: 3px solid #1b74c5; background: #fff; }
.grid { width: 100%; table-layout: fixed; border-collapse: separate; border-spacing: 0; }
.c0 { width: 82px; } .c1 { width: 221px; } .c2 { width: 104px; } .c3 { width: 69px; } .c4 { width: 52px; }
.grid td, .grid th { height: 20px; padding: 0 4px 1px; overflow: hidden; border-right: 1px solid #d9d9d9; border-bottom: 1px solid #d9d9d9; text-align: left; white-space: nowrap; line-height: 18px; font-weight: 400; }
.grid thead th, .grid thead td { height: 39px; padding: 0 0 2px; vertical-align: bottom; text-align: center; background: #f8f8f8; font-weight: 700; border-bottom: 1px dashed #555; }
.grid td.num { text-align: right; }
.grid tbody th { padding: 0 0 1px; background: #f7f7f7; border-right: 2px solid #e0e0e0; }
.rowhead { display: flex; align-items: center; justify-content: space-between; padding: 0 5px 0 6px; color: #666; }
.grid tr.sel td { background: #c8c8c8; }
.grid tr.sel th { background: #1b74c5; }
.grid tr.sel .rowhead { color: #fff; }
.grid tbody tr:first-child > * { border-bottom: 1px dashed #555; }
.grid thead .corner { position: relative; }
.diag { position: absolute; inset: 0; width: 100%; height: 100%; }
.corner-row { position: relative; display: flex; align-items: center; justify-content: space-between; height: 18px; padding: 0 4px 0 4px; }
.corner-row.low { padding: 0 4px 0 3px; }
.low b { flex: 1; text-align: left; padding-left: 5px; font-size: 13px; color: #333; }
.tri-left { color: #777; padding-left: 2px; font: 11px/12px "DejaVu Sans", sans-serif; }

.thumbs { flex: none; display: flex; gap: 8px; height: 53px; padding: 2px 2px 0; border-top: 1px solid #e3e3e3; background: #fdfdfd; }
.shot { position: relative; width: 44px; height: 44px; border: 1px solid #e4e4e4; border-radius: 4px; background: #fff; }
.shot > svg:first-child { display: block; width: 42px; height: 42px; opacity: .8; }
.badge { position: absolute; right: -5px; bottom: -4px; width: 17px; height: 17px; padding: 1px; background: #f0f0f0; border-radius: 2px; }
.win-data .status { height: 27px; }

/* Scatterplot matrix and dendrogram */
.mark { fill: none; stroke-width: 1; }
.matrix-line { stroke: #999; fill: none; }
.ellipse { fill: none; stroke: #e2475a; }
.var { text-anchor: middle; }
.leaf { font-size: 11px; }
.tree { fill: none; shape-rendering: crispEdges; }
```
FILE: app.js
```js
const MENUS = ['文件(F)', '编辑(E)', '表(T)', '行(R)', '列(C)', '实验设计(D)', '分析(A)', '图形(G)', '工具(O)', '视图(V)', '窗口(W)', '帮助(H)'];
const icon = (name, size) => `<svg width="${size}" height="${size}"><use href="#i-${name}"/></svg>`;

document.querySelectorAll('.titlebar').forEach(bar => {
  bar.innerHTML = `<svg class="app"><use href="#i-${bar.dataset.icon}"/></svg><h1>${bar.dataset.title}</h1>` +
    [['min', '最小化'], ['max', '最大化'], ['close', '关闭']].map(([n, l]) => `<button aria-label="${l}">${icon(n, 12)}</button>`).join('');
});
document.querySelectorAll('.menubar').forEach(nav => {
  nav.innerHTML = MENUS.map(m => `<button>${m}</button>`).join('');
});
document.querySelectorAll('.toolbar').forEach(bar => {
  bar.innerHTML = bar.dataset.tools.split(';').map(group => '<div class="tools"><i class="handle"></i>' +
    group.trim().split(/\s+/).map(t => {
      if (t === '|') return '<i class="split"></i>';
      if (t === '>') return '<button class="more" aria-label="更多"><svg width="10" height="6" viewBox="0 0 10 6"><path d="M1 1l4 4 4-4" fill="none" stroke="#999" stroke-width="1.2"/></svg></button>';
      const state = t[0] === '*' ? ' on' : t[0] === '-' ? ' off' : '';
      const name = t.replace(/^[*-]/, '');
      return `<button class="tool${state}" aria-label="${name}">${icon(name, 16)}</button>`;
    }).join('') + '</div>').join('');
});

/* Marker outlines, centred on x, y */
const MARK = {
  x: (x, y, r) => `M${x - r} ${y - r}l${2 * r} ${2 * r}M${x + r} ${y - r}l${-2 * r} ${2 * r}`,
  p: (x, y, r) => `M${x - r} ${y}h${2 * r}M${x} ${y - r}v${2 * r}`,
  d: (x, y, r) => `M${x} ${y - r}l${r} ${r}l${-r} ${r}l${-r} ${-r}z`,
  t: (x, y, r) => `M${x} ${y - r}l${r} ${2 * r}h${-2 * r}z`,
  s: (x, y, r) => `M${x - r} ${y - r}h${2 * r}v${2 * r}h${-2 * r}z`
};

/* Data grid */
const ROWS = [
  ['r', '100% Bran', 'Nabisco'], ['x', '100% Nat. Bran Oats & Honey', 'Quaker Oats'], ['x', '100% Nat. Low Fat Granola w raisins', 'Quaker Oats'],
  ['r', 'All-Bran', 'Kelloggs'], ['r', 'All-Bran with Extra Fiber', 'Kelloggs'], ['t', 'Almond Crunch w Raisins', 'Kelloggs'],
  ['p', 'Apple Cinnamon Cheerios', 'General Mills'], ['p', 'Apple Jacks', 'Kelloggs'], ['x', 'Banana Nut Crunch', 'Post'],
  ['y', 'Basic 4', 'General Mills'], ['d', 'Bran Buds', 'Kelloggs'], ['d', 'Bran Flakes', 'Post'], ['p', "Cap'n'Crunch", 'Quaker Oats'],
  ['d', 'Cheerios', 'General Mills'], ['p', 'Cinnamon Toast Crunch', 'General Mills'],
  ['p', 'Cocoa Puffs', 'General Mills', 120, 1], ['d', 'Complete Oat Bran', 'Kelloggs', 110, 4]
];
const ROW_COLOR = { x: '#55c4a2', t: '#b04ee0', p: '#3cab48', y: '#d2cc5a', d: '#dc9a5c' };
document.getElementById('rows').innerHTML = ROWS.map(([m, name, maker, cal, protein], i) => {
  const shape = m === 'r' ? '<circle cx="6" cy="6" r="4" fill="#d34757"/>'
    : `<path class="mark" stroke="${ROW_COLOR[m]}" d="${MARK[m === 'y' ? 'x' : m](6, 6, m === 'p' || m === 'd' ? 5 : 4)}"/>`;
  return `<tr${m === 'r' ? ' class="sel"' : ''}><th scope="row"><div class="rowhead"><svg width="12" height="12">${shape}</svg>${i + 1}</div></th>` +
    `<td>${name.replace('&', '&amp;')}</td><td>${maker}</td><td>${maker[0]}</td><td>C</td><td class="num">${cal || ''}</td><td class="num">${protein || ''}</td><td></td></tr>`;
}).join('');

/* Scatterplot matrix: marker, calories, protein, fat, sodium, fiber, carbohydrate */
const C = { x: '#bfe9de', y: '#efe9b8', t: '#dcb6f2', p: '#b5e2b8', d: '#f3d3b8', b: '#bcd3f7', s: '#a9dfdc', o: '#efc7a4', r: '#d34757' };
const SHAPE = { x: 'x', y: 'x', t: 't', p: 'p', d: 'd', b: 'd', s: 's', o: 's' };
const DATA = [
  'b,50,1,0,0,0,12', 'b,50,2,0,0,1,11', 'b,80,2,0,5,1,13',
  'p,110,1,0,180,0,13', 'p,110,1,1,200,0,14', 'p,120,1,1,210,0,12', 'p,120,1,3,220,0,13', 'p,120,2,2,160,1,12', 'p,110,2,1,125,1,11', 'p,110,2,0,290,1,15', 'p,120,1,4,70,0,13', 'p,110,1,1,55,1,9', 'p,130,2,3,210,1,13', 'p,100,2,1,140,2,11', 'p,120,2,1,190,0,14', 'p,100,1,1,150,0,12', 'p,130,1,2,170,1,15', 'p,110,2,1,70,1,10', 'p,100,2,0,220,1,12',
  'd,90,3,0,210,5,13', 'd,100,3,1,140,3,15', 'd,110,3,2,290,2,17', 'd,110,6,2,290,2,17', 'd,100,3,0,190,4,20', 'd,110,2,1,230,1,21', 'd,80,3,0,260,4,14', 'd,110,3,1,170,3,18', 'd,120,3,2,280,3,22', 'd,100,2,1,200,1,24', 'd,110,4,0,320,0,22', 'd,110,2,0,260,0,23', 'd,90,3,1,120,4,16', 'd,120,3,1,150,5,12', 'd,100,4,2,240,3,16', 'd,120,3,1,270,2,25', 'd,110,3,1,370,1,16', 'd,120,2,0,220,1,26',
  'o,150,5,2,0,3,25', 'o,150,5,2,0,4,21',
  's,160,5,1,0,5,24', 's,170,5,1,5,5,36', 's,180,5,0,0,6,35', 's,200,7,1,0,6,38', 's,200,5,2,10,5,32', 's,200,6,3,0,6,37', 's,190,5,2,0,4,28', 's,200,5,3,15,3,30',
  't,180,3,1,310,2,31', 't,190,4,2,290,5,27', 't,200,6,1,400,5,37', 't,200,6,2,370,4,35', 't,200,4,1,440,6,33', 't,210,5,2,330,5,30', 't,180,5,1,300,4,26', 't,190,3,2,450,5,29', 't,110,3,0,450,5,31', 't,200,3,1,340,4,24', 't,210,6,2,260,5,34', 't,200,4,2,230,4,32',
  'y,200,4,3,230,3,30', 'y,210,4,2,190,3,27', 'y,210,5,4,150,4,33', 'y,220,4,3,250,5,29', 'y,220,5,3,210,4,26', 'y,210,7,4,140,3,30', 'y,200,5,3,170,2,28', 'y,230,5,3,200,4,31', 'y,210,4,3,270,2,24', 'y,200,4,4,120,3,32', 'y,220,7,3,240,5,30', 'y,210,5,2,310,4,28',
  'x,220,4,6,60,3,26', 'x,240,5,6,150,4,30', 'x,220,5,9,20,4,24', 'x,250,5,6,240,4,27', 'x,190,4,6,200,5,28', 'x,190,7,3,80,3,34', 'x,210,5,5,120,4,18',
  'r,50,3,.5,115,13,8', 'r,60,2,1,140,13,11', 'r,80,4,1,65,10,8', 'r,80,4,.5,120,8,8'
].map(s => s.split(',').map((v, i) => i ? +v : v));
const COLS = [
  { left: 577, x: d => 582 + (d[1] - 50) * .287, mid: 608, a: 36, fiber: 588, label: '卡路里' },
  { left: 645, x: d => 650 + (d[2] - 1) * 9.75, mid: 670.5, a: 42.5, fiber: 656, label: '蛋白质' },
  { left: 713, x: d => 718 + d[3] * 6.6, mid: 725.6, a: 26, fiber: 724, label: '脂肪' },
  { left: 781, x: d => 786 + d[4] * .12, mid: 810, a: 36, fiber: 792, label: '钠' }
];
const ROWDEF = [
  { top: 403, y: d => 466.5 - (d[1] - 50) * .294, mid: 440, a: 36, rho: [0, .7, .65, .2], fiber: 456, grape: 445, ticks: [[250, 408], [150, 437], [50, 467]], minor: [415, 422, 430, 444, 452, 459] },
  { top: 471, y: d => 534 - (d[2] - 1) * 9.7, mid: 513.6, a: 42, rho: [.7, 0, .42, 0], fiber: 518, grape: 508, ticks: [[5, 495], [3, 515], [1, 534]], minor: [476, 485, 505, 524] },
  { top: 539, y: d => 602.5 - d[3] * 6.45, mid: 594.8, a: 26.5, rho: [.55, .42, 0, 0], fiber: 589, grape: 589, ticks: [[8, 550], [4, 576], [0, 602]], minor: [544, 557, 563, 570, 583, 589, 596] },
  { top: 607, y: d => 670.5 - d[4] * .138, mid: 647, a: 39, rho: [.15, .03, .05, 0], fiber: 644, grape: 644, ticks: [[400, 618], [200, 642], [0, 670]], minor: [613, 624, 630, 636, 649, 656, 663] },
  { top: 675, y: d => 738.5 - d[5] * 4.5, mid: 726, a: 33, rho: [.2, .6, .15, 0], fiber: 702, grape: 709, ticks: [[10, 693], [5, 716], [0, 738]], minor: [682, 705, 727] },
  { top: 743, y: d => 801 - (d[6] - 10) * 1.88, mid: 782, a: 36, rho: [.7, .7, .3, 0], fiber: 792, grape: 776, ticks: [[30, 763], [20, 782], [10, 801]], minor: [745, 754, 772, 792] }
];
let out = '<rect x="577" y="403" width="560" height="402" fill="#fff"/>';
ROWDEF.forEach((row, r) => {
  row.ticks.forEach(([label, y]) => { out += `<path class="axis" d="M571 ${y + .5}h6"/><text class="end" x="568" y="${y + 4}">${label}</text>`; });
  out += `<path class="axis" d="${row.minor.map(y => `M574 ${y + .5}h3`).join('')}"/>`;
  COLS.forEach((col, c) => {
    const id = `cell-${r}-${c}`;
    if (r === c) { out += `<text class="var" x="${col.left + 34}" y="${row.top + 34}">${col.label}</text>`; return; }
    let cell = '';
    DATA.forEach(d => {
      const x = +col.x(d).toFixed(1), y = +row.y(d).toFixed(1);
      if (d[0] !== 'r') cell += `<path class="mark" stroke="${C[d[0]]}" d="${MARK[SHAPE[d[0]]](x, y, d[0] === 'p' || d[0] === 'd' || d[0] === 'b' ? 5 : 4)}"/>`;
    });
    cell += `<text x="${col.left + 1}" y="${row.grape}" fill="#dba9ee">Grape-Nuts</text><text x="${col.fiber}" y="${row.fiber}" fill="#d34757">Fiber One</text>`;
    DATA.filter(d => d[0] === 'r').forEach(d => { cell += `<circle cx="${col.x(d).toFixed(1)}" cy="${row.y(d).toFixed(1)}" r="2.7" fill="${C.r}"/>`; });
    const phase = Math.asin(row.rho[c]);
    let path = '';
    for (let k = 0; k <= 72; k++) {
      const t = k * Math.PI / 36;
      path += `${k ? 'L' : 'M'}${(col.mid + col.a * Math.cos(t)).toFixed(1)} ${(row.mid - row.a * Math.sin(t + phase)).toFixed(1)}`;
    }
    cell += `<path class="ellipse" d="${path}"/>`;
    out += `<clipPath id="${id}"><rect x="${col.left}" y="${row.top}" width="68" height="68"/></clipPath><g clip-path="url(#${id})">${cell}</g>`;
  });
});
out += '<path class="matrix-line" d="M577.5 403v402M645.5 403v402M713.5 403v402M781.5 403v402M577 403.500h300M577 471.500h300M577 539.500h300M577 607.500h300M577 675.500h300M577 743.500h300"/>';
document.getElementById('matrix').innerHTML = out;

/* Dendrogram */
const RED = '#d34757', GREEN = '#3cab48', BLUE = '#3c68d8', ORANGE = '#cb7a2b';
const LEAVES = [
  ['#111', ['100% Bran', 'All-Bran', 'All-Bran with Extra Fiber', 'Fiber One']],
  [GREEN, ['Apple Cinnamon Cheerios', "Cap'n'Crunch", 'Trix', 'Honey Graham Ohs', 'Cocoa Puffs', 'Franken Berry', 'French Toast Crisp', 'Froot Loops', 'Frosted Cheerios', 'Lucky Charms', 'Golden Grahams', 'Frosted Alphabits', 'Honey Nut Cheerios', 'Cinnamon Toast Crunch', 'Waffle Crisp', 'Apple Jacks', 'Corn Pops', 'Frosted Flakes', 'Honey Frosted Wheaties', 'Honey-comb', 'Golden Crisp', 'Smacks']],
  [BLUE, ['Puffed Rice', 'Puffed Wheat']],
  [ORANGE, ['Bran Buds', 'Bran Flakes', 'Complete Wheat Bran', 'Complete Oat Bran', 'Cheerios', 'Grape Nuts Flakes', 'Life', 'Maypo', 'Corn Chex', 'Rice Chex', 'Corn Flakes', 'Rice Krispies', 'Kix']]
];
/* Each join: x of the bar, then the start x and y of its upper and lower arm */
const JOINS = [
  [RED, [[1052, 1037, 560, 1037, 569], [1047, 1037, 578, 1037, 587], [1067, 1052, 565, 1047, 583]]],
  [GREEN, [[1043, 1037, 606, 1037, 615], [1045, 1043, 611, 1037, 624], [1047, 1037, 596, 1045, 617],
    [1043, 1037, 633, 1037, 642], [1045, 1043, 638, 1037, 651], [1043, 1037, 669, 1037, 678], [1046, 1037, 660, 1043, 674],
    [1049, 1045, 644, 1046, 667], [1051, 1049, 656, 1037, 687], [1057, 1047, 607, 1051, 671], [1047, 1037, 696, 1037, 706],
    [1058, 1057, 639, 1047, 701], [1049, 1037, 715, 1037, 724], [1072, 1058, 670, 1049, 719], [1046, 1037, 733, 1037, 742],
    [1043, 1037, 751, 1037, 760], [1047, 1043, 756, 1037, 769], [1052, 1046, 737, 1047, 762], [1047, 1037, 778, 1037, 787],
    [1062, 1052, 750, 1047, 783], [1084, 1072, 695, 1062, 766]]],
  [BLUE, [[1045, 1037, 796, 1037, 806]]],
  [ORANGE, [[1041, 1037, 824, 1037, 833], [1051, 1041, 828, 1037, 842], [1055, 1037, 815, 1051, 835], [1046, 1037, 860, 1037, 869],
    [1056, 1037, 851, 1046, 865], [1067, 1055, 825, 1056, 858], [1075, 1067, 841, 1037, 878], [1042, 1037, 887, 1037, 896],
    [1045, 1042, 892, 1037, 906], [1048, 1045, 899, 1048, 925], [1057, 1037, 915, 1057, 925], [1100, 1075, 860, 1100, 925]]],
  ['#000', [[1134, 1121, 766, 1134, 905], [1151, 1151, 574, 1134, 836], [1267, 1151, 705, 1267, 925]]]
];
let tree = '<rect x="814" y="551" width="473" height="369" fill="#fff"/><path d="M1034.5 551v369" stroke="#f1f1f1"/>' +
  `<rect x="814" y="555" width="220" height="37" fill="${RED}"/><path d="M814 564.500h220M814 573.500h220" stroke="#e0717e"/>`;
let n = 0;
LEAVES.forEach(([color, names]) => names.forEach(name => {
  tree += `<text class="leaf" x="823" y="${Math.round(563 + 9.07 * n++)}" fill="${color}">${name}</text>`;
}));
JOINS.forEach(([color, list]) => {
  tree += `<path class="tree" stroke="${color}" d="${list.map(([x, x1, y1, x2, y2]) => `M${x1} ${y1 + .5}H${x + .5}V${y2 + .5}H${x2}`).join('')}"/>`;
});
tree += `<path class="tree" stroke="${RED}" d="M1067 574.5H1151"/><path class="tree" stroke="${GREEN}" d="M1084 730.5H1121"/>` +
  `<path class="tree" stroke="${BLUE}" d="M1045 801.5H1121"/><path class="tree" stroke="${ORANGE}" d="M1100 905.5H1134"/>` +
  '<path class="tree" stroke="#000" d="M1121.5 730V802M1267 900.500H1287"/><path d="M1103.5 551l4.500 4.500-4.500 4.500-4.500-4.500z" fill="#fff" stroke="#000" stroke-width="1.600"/>';
document.getElementById('dendro').innerHTML = tree;
```
